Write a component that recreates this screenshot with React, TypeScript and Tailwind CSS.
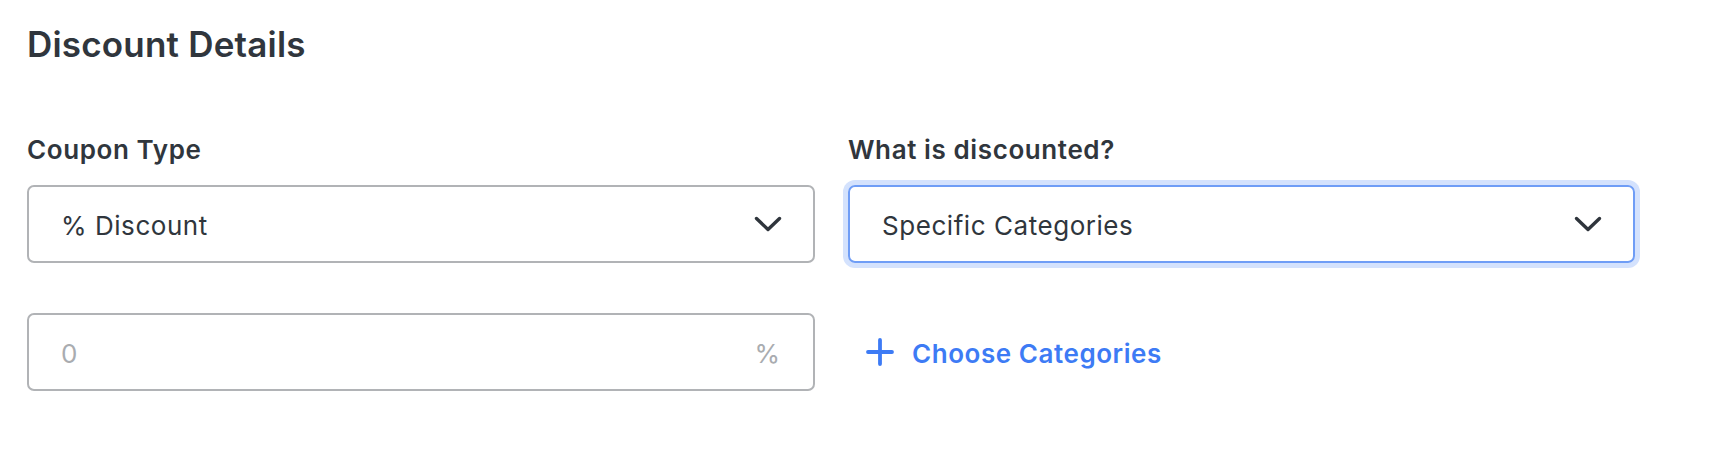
import { useState } from "react";

// Chevron drawn to the 28x16 glyph used in the selects.
function Chevron() {
  return (
    <svg width="28" height="16" viewBox="0 0 28 16" fill="none" className="shrink-0">
      <path d="M2.5 2.5 L14 13.5 L25.5 2.5" stroke="#2f353c" strokeWidth="3.4" strokeLinecap="round" strokeLinejoin="round" />
    </svg>
  );
}

function PlusIcon() {
  return (
    <svg width="28" height="28" viewBox="0 0 28 28" fill="none" className="shrink-0">
      <path d="M14 2 V26 M2 14 H26" stroke="#3d7bf5" strokeWidth="3.8" strokeLinecap="round" />
    </svg>
  );
}

function SelectBox({ value, focused }: { value: string; focused?: boolean }) {
  return (
    <div
      className={
        focused
          ? "flex h-[78px] items-center justify-between rounded-[7px] border-2 border-[#6f9df6] pl-[32px] pr-[31px] ring-[5px] ring-[#d4e2fd]"
          : "flex h-[78px] items-center justify-between rounded-[7px] border-2 border-[#b1b3b6] pl-[32px] pr-[31px]"
      }
    >
      <span className="pt-[4px] text-[26px] leading-[32px] tracking-[0.55px] text-[#30363d]">{value}</span>
      <Chevron />
    </div>
  );
}

export default function App() {
  const [amount] = useState("");

  return (
    <div className="min-h-[468px] bg-white pl-[27px] pt-[22px] font-['Inter',_'Liberation_Sans',_sans-serif] text-[#30363d]">
      <h2 className="text-[35px] font-semibold leading-[44px] tracking-[0.2px] text-[#30363d]">Discount Details</h2>

      <div className="mt-[68px] grid grid-cols-[788px_787px] gap-x-[33px]">
        <div>
          <div className="mb-[19px] text-[26px] font-semibold leading-[32px] tracking-[0.6px]">Coupon Type</div>
          <SelectBox value="% Discount" />
        </div>
        <div>
          <div className="mb-[19px] text-[26px] font-semibold leading-[32px] tracking-[0.6px]">What is discounted?</div>
          <SelectBox value="Specific Categories" focused />
        </div>

        <div className="mt-[50px] flex h-[78px] items-center justify-between rounded-[7px] border-2 border-[#b1b3b6] pl-[32px] pr-[33px]">
          <span className="pt-[4px] text-[26px] leading-[32px] text-[#a9acb0]">{amount || "0"}</span>
          <span className="pt-[4px] text-[26px] leading-[32px] text-[#a9acb0]">%</span>
        </div>
        <div className="mt-[50px] flex h-[78px] items-center gap-[18px] pl-[18px]">
          <PlusIcon />
          <span className="pt-[4px] text-[26px] font-semibold leading-[32px] tracking-[0.55px] text-[#3d7bf5]">Choose Categories</span>
        </div>
      </div>
    </div>
  );
}
